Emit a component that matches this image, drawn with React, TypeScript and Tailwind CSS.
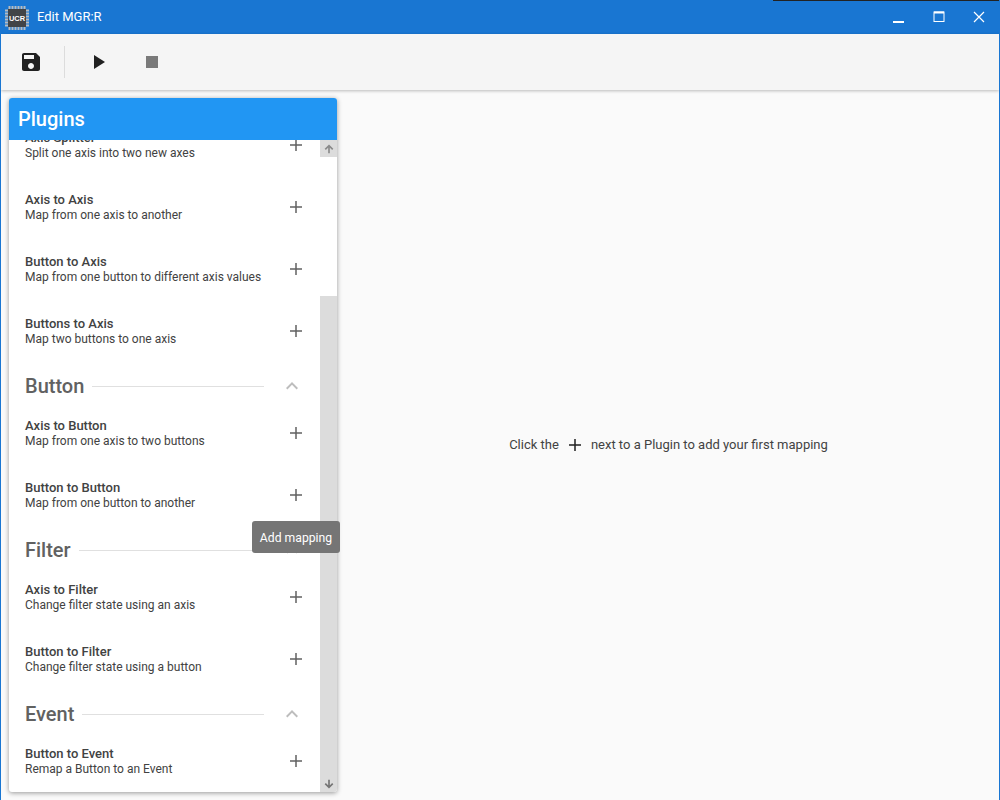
const font = { fontFamily: "Roboto, sans-serif" };

function Plus({ className = "w-[18px] h-[18px] text-[#616161]" }: { className?: string }) {
  return (
    <svg viewBox="0 0 18 18" className={className} fill="currentColor">
      <path d="M3 8.25h5.25V3h1.5v5.25H15v1.5H9.75V15h-1.5V9.75H3z" />
    </svg>
  );
}

function Chevron() {
  return (
    <svg viewBox="0 0 24 24" className="w-6 h-6 text-[#bdbdbd]" fill="currentColor">
      <path d="M12 8l-6 6 1.41 1.41L12 10.83l4.59 4.58L18 14z" />
    </svg>
  );
}

function Row({ title, desc }: { title: string; desc: string }) {
  return (
    <div className="h-[62px] flex items-center pl-4 shrink-0">
      <div className="flex-1 min-w-0 text-[#424242]">
        <div className="text-[13px] leading-[16px] font-medium">{title}</div>
        <div className="text-[12px] leading-[15px]">{desc}</div>
      </div>
      <div className="w-[30px] mr-[9px] flex justify-center">
        <Plus />
      </div>
    </div>
  );
}

function Section({ title }: { title: string }) {
  return (
    <div className="h-[40px] pt-2 flex items-center pl-4 shrink-0">
      <span className="text-[20px] leading-6 font-medium text-[#616161]">{title}</span>
      <div className="flex-1 h-px bg-[#e0e0e0] ml-[8px]" />
      <div className="w-[56px] flex justify-center">
        <Chevron />
      </div>
    </div>
  );
}

function Scrollbar() {
  return (
    <div className="w-[17px] shrink-0 flex flex-col bg-[#dcdcdc]">
      <div className="h-[17px] flex items-center justify-center">
        <svg viewBox="0 0 24 24" className="w-[10px] h-[10px] text-[#8a8a8a]" fill="none" stroke="currentColor" strokeWidth="4">
          <path d="M12 22V4M3 13l9-9 9 9" />
        </svg>
      </div>
      <div className="h-[139px] bg-white" />
      <div className="flex-1" />
      <div className="h-[17px] flex items-center justify-center">
        <svg viewBox="0 0 24 24" className="w-[10px] h-[10px] text-[#757575]" fill="none" stroke="currentColor" strokeWidth="4">
          <path d="M12 2v18M3 11l9 9 9-9" />
        </svg>
      </div>
    </div>
  );
}

function Logo() {
  return (
    <svg width="24" height="24" viewBox="0 0 24 24" className="shrink-0 translate-y-px">
      <g stroke="#b8bcc0" strokeWidth="2">
        <path d="M4.5 0v24M7.5 0v24M10.5 0v24M13.5 0v24M16.5 0v24M19.5 0v24M0 4.5h24M0 7.5h24M0 10.5h24M0 13.5h24M0 16.5h24M0 19.5h24" />
      </g>
      <rect x="3" y="3" width="18" height="18" fill="#424447" />
      <text x="12" y="14.5" fontSize="7.5" fontWeight="700" fill="#fff" textAnchor="middle" fontFamily="Liberation Sans, sans-serif">UCR</text>
    </svg>
  );
}

export default function App() {
  return (
    <div style={font} className="w-[1000px] h-[800px] flex flex-col bg-[#fafafa] overflow-hidden relative border-x border-[#1976d2]">
      <div className="absolute top-0 right-0 w-[226px] h-px bg-[#222]" />
      <header className="h-[34px] bg-[#1976d2] flex items-center shrink-0 text-white -mx-px">
        <div className="pl-[5px] pr-[8px]"><Logo /></div>
        <span className="text-[13px] flex-1">Edit MGR:R</span>
        <div className="flex items-center">
          <button className="w-10 h-[34px] flex items-center justify-center">
            <svg width="14" height="14" viewBox="0 0 14 14" fill="#fff"><path d="M1 11h11v2H1z" /></svg>
          </button>
          <button className="w-10 h-[34px] flex items-center justify-center">
            <svg width="14" height="14" viewBox="0 0 14 14" fill="none" stroke="#fff"><rect x="2" y="2" width="10" height="9.5" /><path d="M2 2.5h10" strokeWidth="2" /></svg>
          </button>
          <button className="w-10 h-[34px] flex items-center justify-center mr-[1px]">
            <svg width="14" height="14" viewBox="0 0 14 14" fill="none" stroke="#fff" strokeWidth="1.2"><path d="M2 2l10 10M12 2L2 12" /></svg>
          </button>
        </div>
      </header>

      <div className="h-[56px] bg-[#f5f5f5] shadow-[0_1px_3px_rgba(0,0,0,0.25)] flex items-center shrink-0 relative z-10">
        <div className="w-[60px] flex justify-center">
          <svg viewBox="0 0 24 24" className="w-6 h-6 text-[#212121]" fill="currentColor">
            <path d="M17 3H5c-1.11 0-2 .9-2 2v14c0 1.1.89 2 2 2h14c1.1 0 2-.9 2-2V7l-4-4zm-5 16c-1.66 0-3-1.34-3-3s1.34-3 3-3 3 1.34 3 3-1.34 3-3 3zm3-10H5V5h10v4z" />
          </svg>
        </div>
        <div className="w-px h-[32px] bg-[#dcdcdc] ml-[3px]" />
        <div className="w-[66px] flex justify-center">
          <svg viewBox="0 0 24 24" className="w-6 h-6 text-[#212121]" fill="currentColor"><path d="M8 5v14l11-7z" /></svg>
        </div>
        <div className="w-[36px] flex justify-center pl-[5px]">
          <svg viewBox="0 0 24 24" className="w-6 h-6 text-[#7a7a7a]" fill="currentColor"><path d="M6 6h12v12H6z" /></svg>
        </div>
      </div>

      <div className="flex-1 flex min-h-0 pt-2 pl-2 pb-2 relative">
        <aside className="w-[328px] h-[694px] rounded-[3px] bg-white shadow-[0_1px_5px_rgba(0,0,0,0.4)] flex flex-col overflow-hidden shrink-0">
          <div className="h-[42px] bg-[#2196f3] text-white flex items-center pl-[9px] text-[20px] font-medium shrink-0">Plugins</div>
          <div className="flex-1 flex min-h-0">
            <div className="flex-1 min-w-0 overflow-hidden">
              <div className="-mt-[26px]">
                <Row title="Axis Splitter" desc="Split one axis into two new axes" />
                <Row title="Axis to Axis" desc="Map from one axis to another" />
                <Row title="Button to Axis" desc="Map from one button to different axis values" />
                <Row title="Buttons to Axis" desc="Map two buttons to one axis" />
                <Section title="Button" />
                <Row title="Axis to Button" desc="Map from one axis to two buttons" />
                <Row title="Button to Button" desc="Map from one button to another" />
                <Section title="Filter" />
                <Row title="Axis to Filter" desc="Change filter state using an axis" />
                <Row title="Button to Filter" desc="Change filter state using a button" />
                <Section title="Event" />
                <Row title="Button to Event" desc="Remap a Button to an Event" />
              </div>
            </div>
            <Scrollbar />
          </div>
        </aside>

        <div className="absolute left-[251px] top-[431px] h-[32px] w-[88px] pt-[2px] rounded-[3px] bg-[#757575] text-white text-[12.2px] flex items-center justify-center">Add mapping</div>

        <main className="flex-1 flex items-center justify-center">
          <div className="flex items-center text-[13px] text-[#424242] ml-[1px]">
            <span>Click the</span>
            <span className="mx-[7px]"><Plus className="w-[18px] h-[18px] text-[#212121]" /></span>
            <span>next to a Plugin to add your first mapping</span>
          </div>
        </main>
      </div>
    </div>
  );
}
